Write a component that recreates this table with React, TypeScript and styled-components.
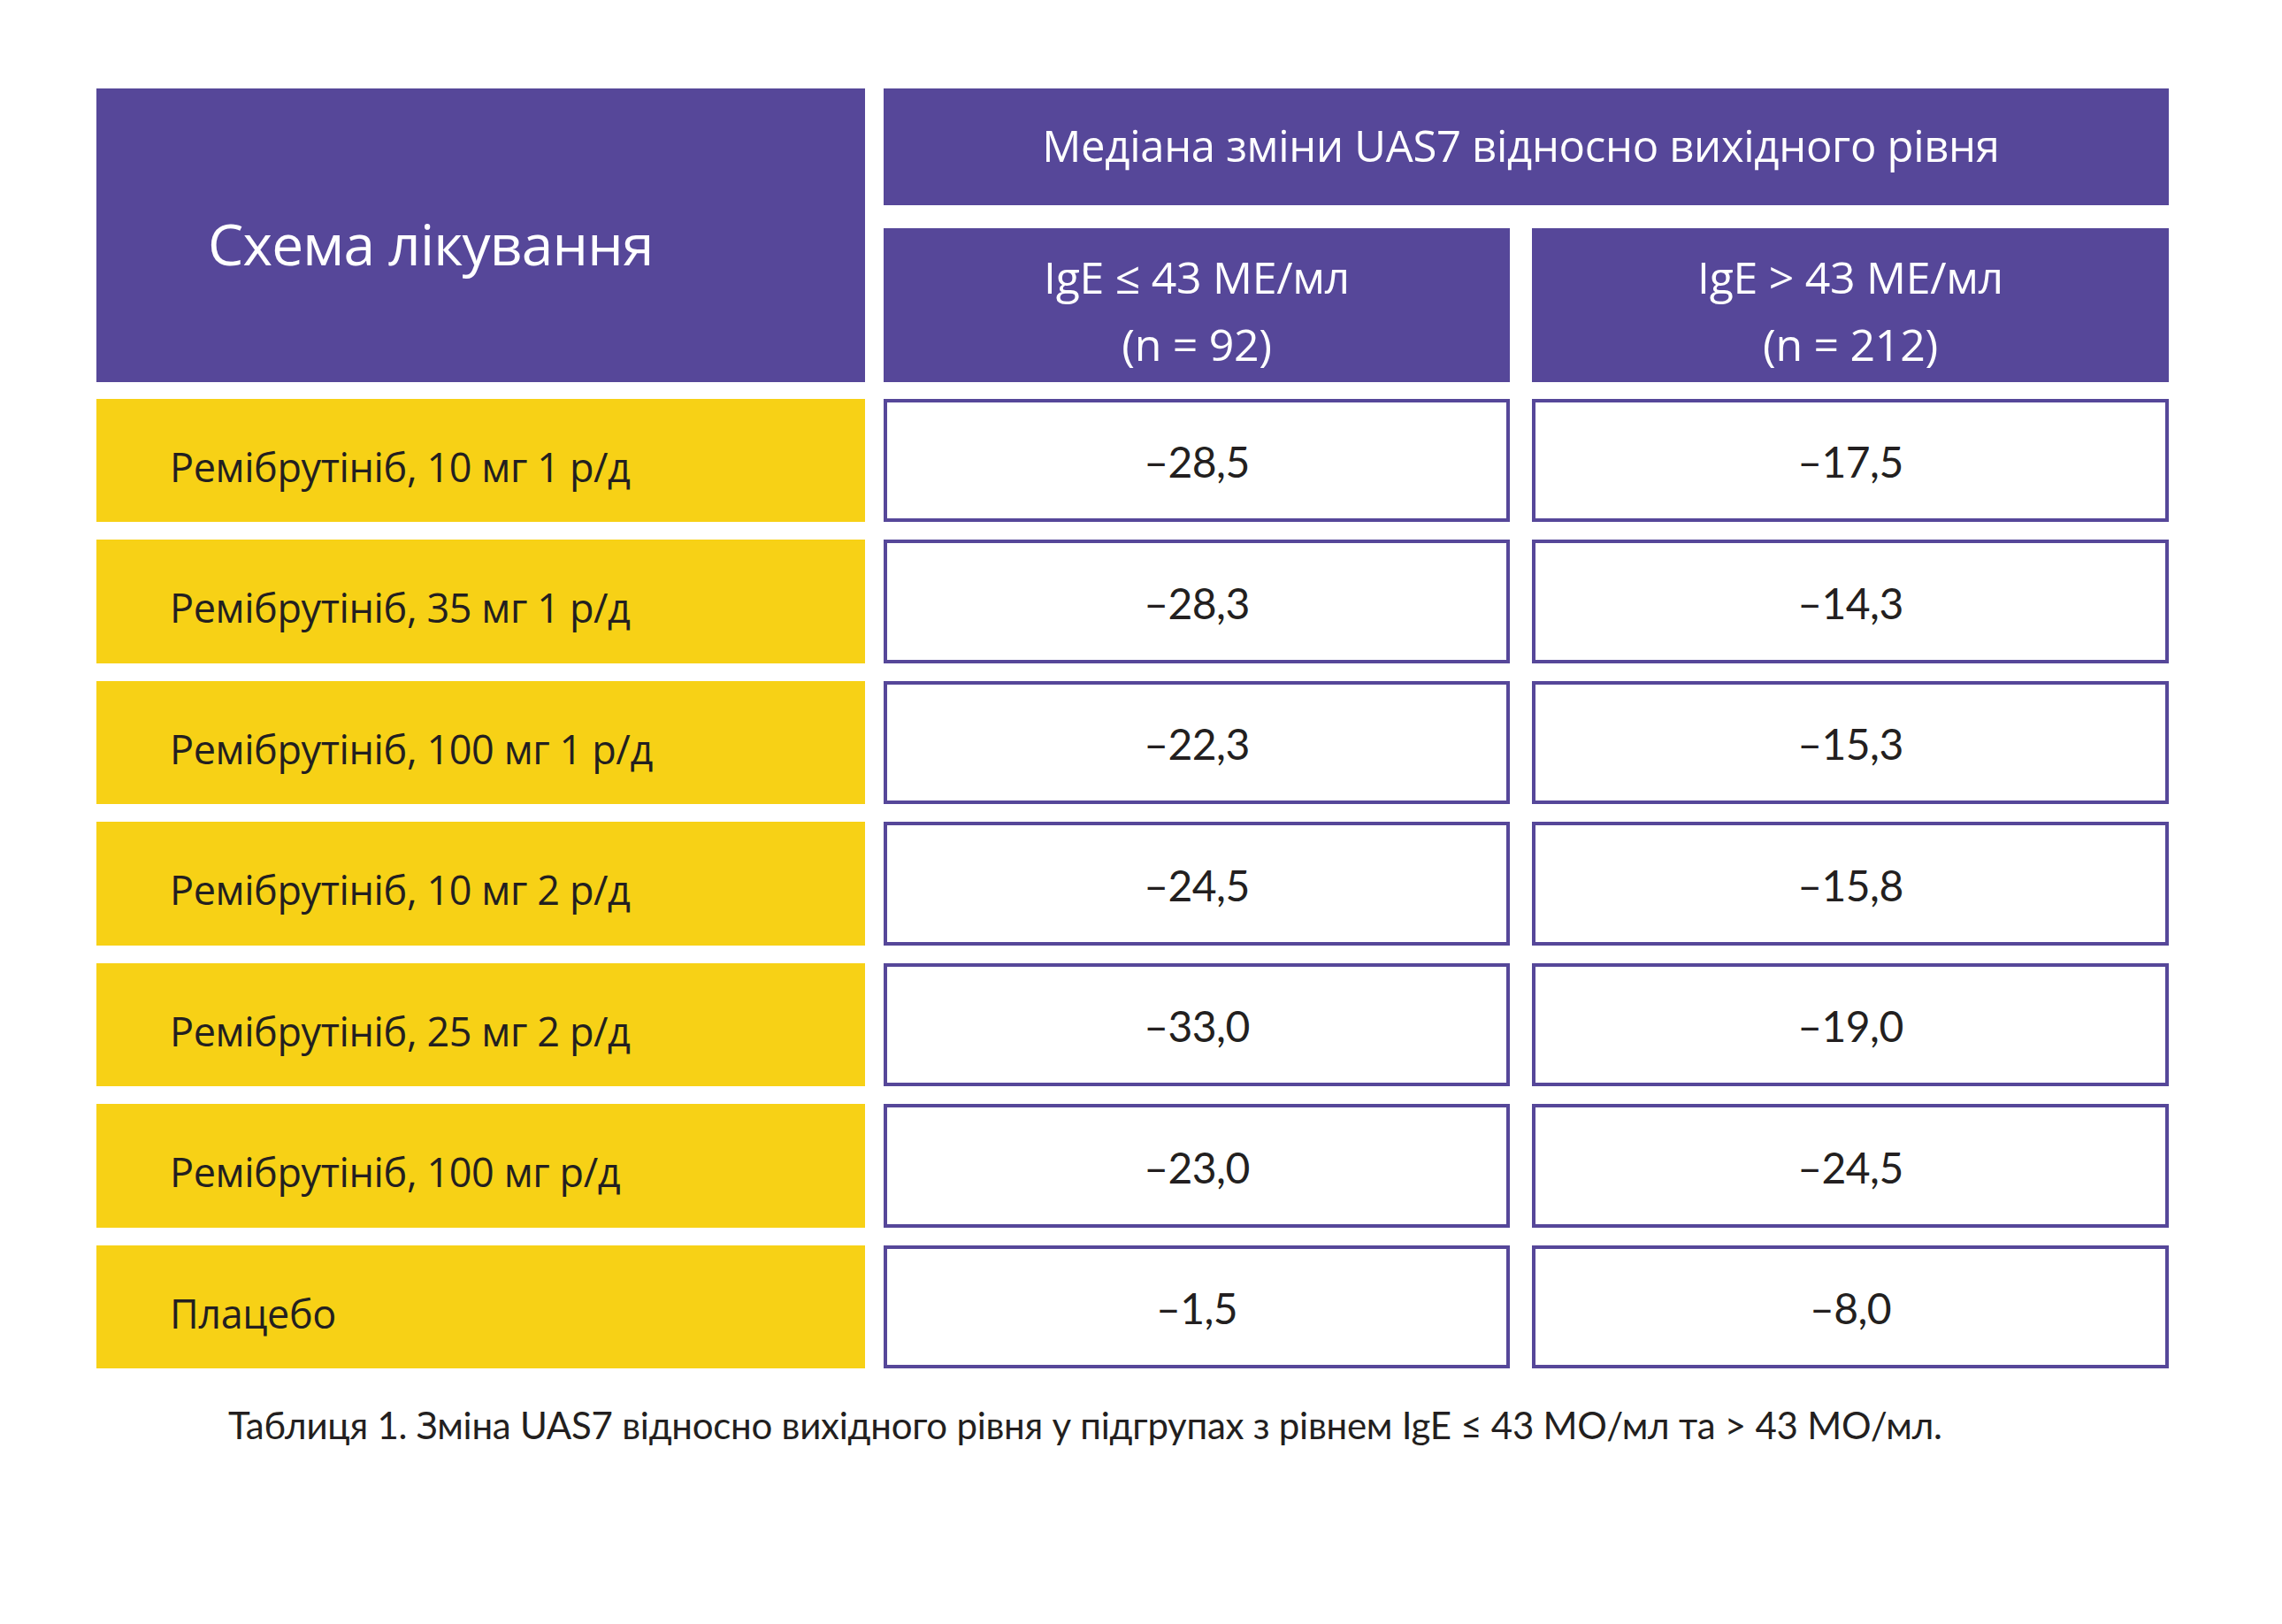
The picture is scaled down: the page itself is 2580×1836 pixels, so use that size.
import React from "react";
import styled, { createGlobalStyle } from "styled-components";

const PURPLE = "#564799";
const YELLOW = "#F7D116";
const INK = "#231f20";

const GlobalStyle = createGlobalStyle`
  html, body {
    margin: 0;
    padding: 0;
    background: #ffffff;
  }
  body {
    font-family: "Open Sans", "Noto Sans", sans-serif;
  }
`;

const Page = styled.div`
  width: 2580px;
  height: 1836px;
  box-sizing: border-box;
  padding: 100px 0 0 109px;
  background: #ffffff;
`;

const Table = styled.div`
  display: flex;
  flex-direction: column;
  width: 2343px;
`;

const tracks = "869px 21px 708px 25px 720px";

const Head = styled.div`
  display: grid;
  grid-template-columns: ${tracks};
  grid-template-rows: 132px 174px;
  row-gap: 25.6px;
`;

const Body = styled.div`
  display: grid;
  grid-template-columns: ${tracks};
  grid-auto-rows: 139.5px;
  row-gap: 20px;
  margin-top: 19.3px;
`;

const HeadCell = styled.div<{ $col: string; $row?: string }>`
  grid-column: ${(p) => p.$col};
  grid-row: ${(p) => p.$row ?? "auto"};
  background: ${PURPLE};
  color: #ffffff;
  display: flex;
  align-items: center;
`;

const SchemeTitle = styled(HeadCell)`
  padding: 20px 0 0 126px;
  font-size: 64px;
  letter-spacing: -0.8px;
  justify-content: flex-start;
`;

const GroupTitle = styled(HeadCell)`
  justify-content: center;
  font-size: 49px;
  letter-spacing: -0.3px;
  padding: 0 12px 4px 0;
`;

const SubTitle = styled(HeadCell)`
  flex-direction: column;
  justify-content: center;
  font-size: 50px;
  line-height: 76px;
  letter-spacing: -0.3px;
  padding-top: 12px;
  text-align: center;
`;

const Line = styled.span`
  display: block;
`;

const DrugCell = styled.div`
  grid-column: 1;
  background: ${YELLOW};
  color: ${INK};
  display: flex;
  align-items: center;
  padding: 13px 0 0 83px;
  font-size: 45px;
  letter-spacing: -0.4px;
`;

const ValueCell = styled.div<{ $col: number }>`
  grid-column: ${(p) => p.$col};
  box-sizing: border-box;
  border: 4px solid ${PURPLE};
  background: #ffffff;
  color: ${INK};
  display: flex;
  align-items: center;
  justify-content: center;
  padding-top: 2px;
  font-family: "Lato", "Open Sans", sans-serif;
  font-size: 48px;
  letter-spacing: -0.6px;
`;

const Caption = styled.p`
  margin: 39px 0 0 149px;
  font-family: "Lato", "Open Sans", sans-serif;
  font-size: 42px;
  line-height: 50px;
  color: ${INK};
  letter-spacing: -0.25px;
`;

const rows: [string, string, string][] = [
  ["Ремібрутініб, 10 мг 1 р/д", "–28,5", "–17,5"],
  ["Ремібрутініб, 35 мг 1 р/д", "–28,3", "–14,3"],
  ["Ремібрутініб, 100 мг 1 р/д", "–22,3", "–15,3"],
  ["Ремібрутініб, 10 мг 2 р/д", "–24,5", "–15,8"],
  ["Ремібрутініб, 25 мг 2 р/д", "–33,0", "–19,0"],
  ["Ремібрутініб, 100 мг р/д", "–23,0", "–24,5"],
  ["Плацебо", "–1,5", "–8,0"],
];

export default function App() {
  return (
    <>
      <GlobalStyle />
      <Page>
        <Table>
          <Head>
            <SchemeTitle $col="1" $row="1 / 3">
              Схема лікування
            </SchemeTitle>
            <GroupTitle $col="3 / 6" $row="1">
              Медіана зміни UAS7 відносно вихідного рівня
            </GroupTitle>
            <SubTitle $col="3" $row="2">
              <Line>IgE ≤ 43 МЕ/мл</Line>
              <Line>(n = 92)</Line>
            </SubTitle>
            <SubTitle $col="5" $row="2">
              <Line>IgE &gt; 43 МЕ/мл</Line>
              <Line>(n = 212)</Line>
            </SubTitle>
          </Head>
          <Body>
            {rows.map(([name, low, high]) => (
              <React.Fragment key={name}>
                <DrugCell>{name}</DrugCell>
                <ValueCell $col={3}>{low}</ValueCell>
                <ValueCell $col={5}>{high}</ValueCell>
              </React.Fragment>
            ))}
          </Body>
        </Table>
        <Caption>
          Таблиця 1. Зміна UAS7 відносно вихідного рівня у підгрупах з рівнем IgE ≤ 43 МО/мл та &gt; 43 МО/мл.
        </Caption>
      </Page>
    </>
  );
}
